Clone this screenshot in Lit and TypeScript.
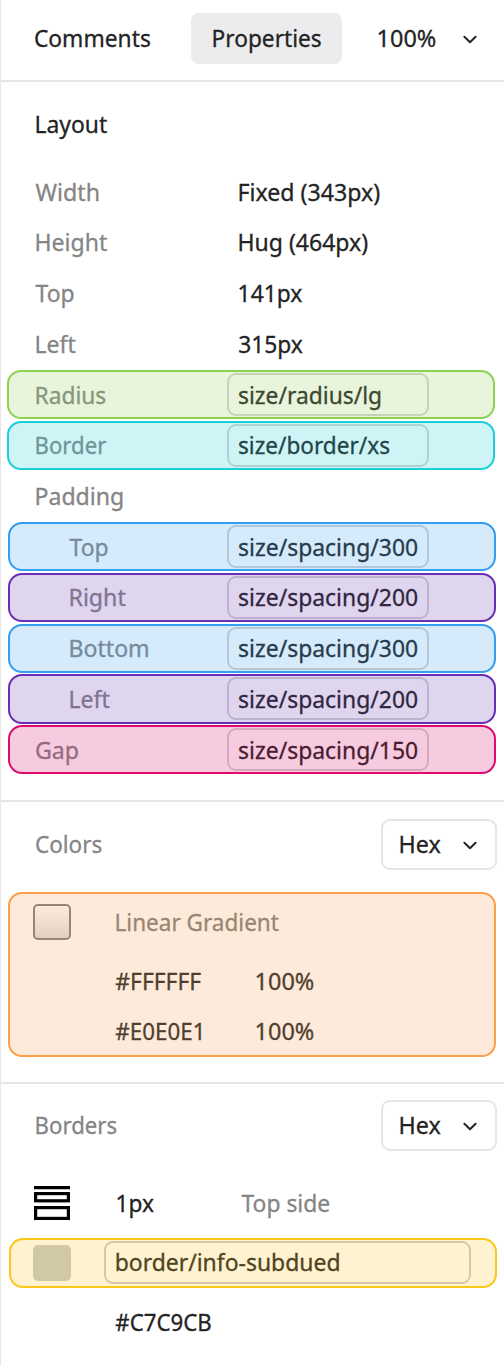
import { LitElement, html, css, svg, nothing } from "lit";
import { customElement, property } from "lit/decorators.js";
import { styleMap } from "lit/directives/style-map.js";

const FONT = '240px "Noto Sans", "Open Sans", sans-serif';
const ctx = document.createElement("canvas").getContext("2d")!;

/** A single line of text condensed so that its ink, with its thin outline, spans `w` pixels. */
@customElement("panel-text")
class PanelText extends LitElement {
  @property() text = "";
  @property({ type: Number }) w = 0;

  static styles = css`
    :host { display: block; flex: none; line-height: 32px; white-space: nowrap; -webkit-text-stroke: 0.3px currentColor; }
    .box { display: block; }
    .ink { display: inline-block; transform-origin: 0 50%; }
  `;

  render() {
    // Measured at ten times the drawn size, to keep fractions of a pixel.
    ctx.font = FONT;
    const m = ctx.measureText(this.text);
    const left = m.actualBoundingBoxLeft / 10;
    const k = (this.w - 0.9) / (left + m.actualBoundingBoxRight / 10);
    const transform = `translateX(${left * k * 0.5 - 0.4}px) scaleX(${k})`;
    return html`<span class="box" style=${styleMap({ width: `${this.w}px` })}
      ><span class="ink" style=${styleMap({ transform })}>${this.text}</span></span>`;
  }
}

type Row = { label: string; lw: number; value?: string; vw?: number; tone?: string; indent?: boolean };

const ROWS: Row[] = [
  { label: "Width", lw: 63.3, value: "Fixed (343px)", vw: 140.5 },
  { label: "Height", lw: 71, value: "Hug (464px)", vw: 128.5 },
  { label: "Top", lw: 38.7, value: "141px", vw: 63.3 },
  { label: "Left", lw: 39.5, value: "315px", vw: 64.3 },
  { label: "Radius", lw: 69.5, value: "size/radius/lg", vw: 142, tone: "green" },
  { label: "Border", lw: 70.3, value: "size/border/xs", vw: 150.8, tone: "cyan" },
  { label: "Padding", lw: 86.5 },
  { label: "Top", lw: 38.7, value: "size/spacing/300", vw: 178.8, tone: "blue", indent: true },
  { label: "Right", lw: 55.5, value: "size/spacing/200", vw: 178.8, tone: "purple", indent: true },
  { label: "Bottom", lw: 78, value: "size/spacing/300", vw: 178.8, tone: "blue", indent: true },
  { label: "Left", lw: 39.5, value: "size/spacing/200", vw: 178.8, tone: "purple", indent: true },
  { label: "Gap", lw: 42.5, value: "size/spacing/150", vw: 178.8, tone: "pink" },
];

const chevron = html`<svg class="chevron" width="14" height="9" viewBox="0 0 14 9">
  ${svg`<path d="M1.4 1.8 L7 7.3 L12.6 1.8" fill="none" stroke="#232323" stroke-width="2" stroke-linecap="round" stroke-linejoin="round"/>`}
</svg>`;

const topSideIcon = html`<svg class="side-icon" width="36" height="34" viewBox="0 0 36 34">
  ${svg`<path d="M0 1.6H36" stroke="#000" stroke-width="3.2"/>
  <rect x="1.6" y="7.6" width="32.8" height="7.2" fill="none" stroke="#000" stroke-width="3.2"/>
  <rect x="1.6" y="21.6" width="32.8" height="10.8" fill="none" stroke="#000" stroke-width="3.2"/>`}
</svg>`;

const t = (text: string, w: number) => html`<panel-text .text=${text} .w=${w}></panel-text>`;

@customElement("app-root")
class AppRoot extends LitElement {
  static styles = css`
    :host {
      display: block; box-sizing: border-box; width: 504px; height: 1366px; overflow: hidden;
      background: #fff; border-left: 1px solid #e6e6e6;
      font: 24px "Noto Sans", "Open Sans", sans-serif; color: #232323;
    }
    * { box-sizing: border-box; }
    .header { display: flex; align-items: center; height: 82px; padding: 0 26px 5px 34.3px; border-bottom: 2px solid #e6e6e6; }
    .tab { display: flex; align-items: center; justify-content: center; width: 151px; height: 51px; margin: 2px 0 0 40.2px; padding: 0 0 2px 1px; border-radius: 8px; background: #ececee; }
    .zoom { display: flex; align-items: center; gap: 28.5px; margin-left: 36px; }
    .zoom .chevron { margin: 3px 0 0 -1px; }
    .chevron { display: block; flex: none; }
    .title { padding: 26px 0 0 35px; height: 84.4px; }
    .rows { height: 634px; }
    .row { display: flex; align-items: center; height: 50.72px; padding: 0 8px 0 7px; }
    .row.green, .row.cyan { padding: 0 9px 0 6px; }
    .line { display: flex; align-items: center; flex: 1; height: 49.3px; border: 2px solid transparent; border-radius: 14px; }
    .label { display: flex; width: 216.5px; padding: 0 0 0 26px; color: #858585; }
    .green .label, .cyan .label { width: 217.5px; padding-left: 27px; }
    .label.indent { padding-left: 60.3px; }
    .value { display: flex; align-items: center; height: 43px; width: 202px; padding: 0 0 0 10px; border: 2px solid transparent; border-radius: 9px; }
    .green .line { background: #e8f5dc; border-color: #8fd24d; }
    .green .label { color: #87957a; } .green .value { color: #3c472f; border-color: #c6d3b9; }
    .cyan .line { background: #cff4f6; border-color: #1bcfd8; }
    .cyan .label { color: #6f9597; } .cyan .value { color: #214648; border-color: #add1d4; }
    .blue .line { background: #d5eafb; border-color: #349ef0; }
    .blue .label { color: #758a9b; } .blue .value { color: #273b4c; border-color: #b3c7d8; }
    .purple .line { background: #dfd5ef; border-color: #672fb6; }
    .purple .label { color: #7f748f; } .purple .value { color: #302640; border-color: #bdb2cd; }
    .pink .line { background: #f7cbdf; border-color: #df0a6d; }
    .pink .label { color: #976b7f; } .pink .value { color: #491c30; border-color: #d4a9bc; }
    .section-head { display: flex; align-items: center; justify-content: space-between; border-top: 2px solid #e6e6e6; height: 91px; padding: 0 7px 5px 35.4px; color: #858585; }
    .borders .section-head { padding-bottom: 7px; }
    .select { display: flex; align-items: center; justify-content: space-between; width: 116px; height: 51px; padding: 0 18px 0 17px; border: 2px solid #e6e6e6; border-radius: 9px; color: #232323; }
    .select .chevron { margin-top: 2px; }
    .gradient { height: 165px; margin: 1px 8px 25px 7px; border: 2px solid #ff9e48; border-radius: 14px; background: #feeadb; color: #503f2e; padding: 3px 0 0 23px; }
    .g-row { display: flex; align-items: center; height: 49.5px; }
    .g-row.first { height: 59px; padding-bottom: 9px; color: #998672; }
    .g-row.first panel-text { margin: 0 0 0 45.3px; }
    .swatch { flex: none; width: 38px; height: 36px; border-radius: 5px; }
    .grad { border: 2px solid #998672; background: linear-gradient(#fdeada, #e2d0c1); }
    .g-row .hex { width: 140px; margin-left: 83px; }
    .stroke { display: flex; align-items: flex-start; height: 64.4px; padding: 13px 0 0 33px; }
    .side-icon { display: block; flex: none; }
    .stroke .px { width: 124.7px; margin-left: 47px; padding-top: 1px; }
    .side { color: #858585; padding-top: 1px; }
    .token { display: flex; align-items: center; height: 50px; margin: 0 7px 0 8px; padding-left: 22px; border: 2px solid #fbc81a; border-radius: 14px; background: #fef2d0; }
    .solid { background: #d1c9a5; }
    .chip { display: flex; align-items: center; width: 367px; height: 43px; margin-left: 33px; padding: 0 0 1px 10px; border: 2px solid #d3c7a8; border-radius: 9px; color: #50441f; }
    .code { padding: 18px 0 0 115px; }
  `;

  private row(r: Row) {
    return html`<div class="row ${r.tone ?? ""}">
      <div class="line">
        <div class="label ${r.indent ? "indent" : ""}">${t(r.label, r.lw)}</div>
        ${r.value ? html`<div class="value">${t(r.value, r.vw!)}</div>` : nothing}
      </div>
    </div>`;
  }

  private head(name: string, w: number) {
    return html`<div class="section-head">${t(name, w)}
      <div class="select">${t("Hex", 40.5)}${chevron}</div>
    </div>`;
  }

  render() {
    return html`
      <div class="header">
        ${t("Comments", 115.5)}
        <div class="tab">${t("Properties", 108)}</div>
        <div class="zoom">${t("100%", 57.5)}${chevron}</div>
      </div>
      <div class="title">${t("Layout", 71)}</div>
      <div class="rows">${ROWS.map((r) => this.row(r))}</div>
      ${this.head("Colors", 66)}
      <div class="gradient">
        <div class="g-row first"><div class="swatch grad"></div>${t("Linear Gradient", 162.7)}</div>
        <div class="g-row"><div class="hex">${t("#FFFFFF", 85.7)}</div>${t("100%", 57.5)}</div>
        <div class="g-row"><div class="hex">${t("#E0E0E1", 85.7)}</div>${t("100%", 57.5)}</div>
      </div>
      <div class="borders">
        ${this.head("Borders", 80.5)}
        <div class="stroke">${topSideIcon}<div class="px">${t("1px", 37)}</div><div class="side">${t("Top side", 88.3)}</div></div>
        <div class="token"><div class="swatch solid"></div><div class="chip">${t("border/info-subdued", 223)}</div></div>
        <div class="code">${t("#C7C9CB", 95.7)}</div>
      </div>
    `;
  }
}
